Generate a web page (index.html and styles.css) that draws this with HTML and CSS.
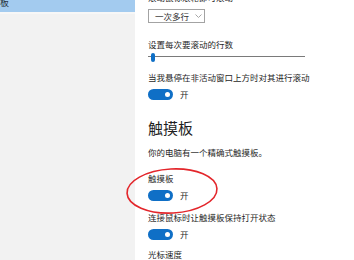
FILE: index.html
```html
<!DOCTYPE html>
<html lang="zh-CN">
<head>
<meta charset="utf-8">
<link rel="stylesheet" href="styles.css">
</head>
<body>
<div class="sidebar">
  <div class="nav-item selected"><span class="nav-text">触摸板</span></div>
</div>
<main class="content">
  <div class="label first">滚动鼠标滚轮即可滚动</div>
  <div class="dropdown">
    <span>一次多行</span>
    <svg class="chev" width="7" height="4" viewBox="0 0 7 4"><path d="M0.5 0.5 L3.5 3.5 L6.5 0.5" fill="none" stroke="#a6a6a6" stroke-width="1"/></svg>
  </div>
  <div class="label l-slider">设置每次要滚动的行数</div>
  <div class="slider"><div class="track"></div><div class="thumb"></div></div>
  <div class="label l-hover">当我悬停在非活动窗口上方时对其进行滚动</div>
  <div class="toggle-row"><span class="toggle"><span class="knob"></span></span><span class="state">开</span></div>
  <h2 class="heading">触摸板</h2>
  <div class="label desc">你的电脑有一个精确式触摸板。</div>
  <div class="label l-pad">触摸板</div>
  <div class="toggle-row"><span class="toggle"><span class="knob"></span></span><span class="state">开</span></div>
  <div class="label l-mouse">连接鼠标时让触摸板保持打开状态</div>
  <div class="toggle-row"><span class="toggle"><span class="knob"></span></span><span class="state">开</span></div>
  <div class="label l-last">光标速度</div>
  <svg class="annot" width="110" height="60" viewBox="0 0 110 60"><ellipse cx="55" cy="30" rx="45" ry="22" fill="none" stroke="#e3262b" stroke-width="1.6" transform="rotate(-3 55 30)"/></svg>
</main>
</body>
</html>
```
FILE: styles.css
```css
html, body {
  margin: 0;
  padding: 0;
}
body {
  width: 354px;
  height: 260px;
  overflow: hidden;
  display: flex;
  background: #ffffff;
  font-family: "Noto Sans CJK SC", "Noto Sans", sans-serif;
  color: #1f1f1f;
}
.sidebar {
  width: 135px;
  flex: none;
  background: #f2f2f2;
}
.nav-item.selected {
  height: 12px;
  background: #a3cbef;
  border-bottom: 2px solid #f7f7f7;
  overflow: hidden;
  font-size: 9px;
  line-height: 6px;
  white-space: nowrap;
}
.nav-text {
  display: block;
  text-indent: -18px;
  color: #2a3440;
}
.content {
  position: relative;
  flex: 1;
  padding-left: 13px;
  display: flex;
  flex-direction: column;
  align-items: flex-start;
}
.label {
  font-size: 8.5px;
  line-height: 12px;
  height: 12px;
  white-space: nowrap;
}
.first { margin-top: -9px; }
.dropdown {
  margin-top: 6px;
  box-sizing: border-box;
  height: 17px;
  width: 57px;
  border: 1px solid #a3a3a3;
  display: flex;
  align-items: center;
  padding-left: 6px;
  gap: 6px;
  font-size: 8.5px;
  color: #333;
}
.l-slider { margin-top: 15px; }
.slider {
  position: relative;
  width: 157px;
  height: 16px;
  display: flex;
  align-items: center;
}
.track {
  width: 100%;
  height: 1px;
  background: #7a7a7a;
}
.thumb {
  position: absolute;
  left: 3px;
  top: 3px;
  width: 4px;
  height: 9px;
  border-radius: 2px;
  background: #0f6fc6;
}
.l-hover { margin-top: 8px; }
.toggle-row {
  margin-top: 6px;
  height: 11px;
  display: flex;
  align-items: center;
  gap: 7px;
}
.toggle {
  position: relative;
  width: 25px;
  height: 11px;
  border-radius: 6px;
  background: #0f6fc6;
}
.knob {
  position: absolute;
  right: 3px;
  top: 3px;
  width: 5px;
  height: 5px;
  border-radius: 50%;
  background: #ffffff;
}
.state {
  font-size: 8.5px;
  line-height: 11px;
}
.heading {
  margin: 18px 0 0 0;
  font-size: 15px;
  font-weight: 400;
  line-height: 20px;
  height: 20px;
}
.desc { margin-top: 8px; }
.l-pad { margin-top: 14px; }
.l-mouse { margin-top: 10px; }
.l-last { margin-top: 8px; }
.annot {
  position: absolute;
  left: -18px;
  top: 161px;
}
```
